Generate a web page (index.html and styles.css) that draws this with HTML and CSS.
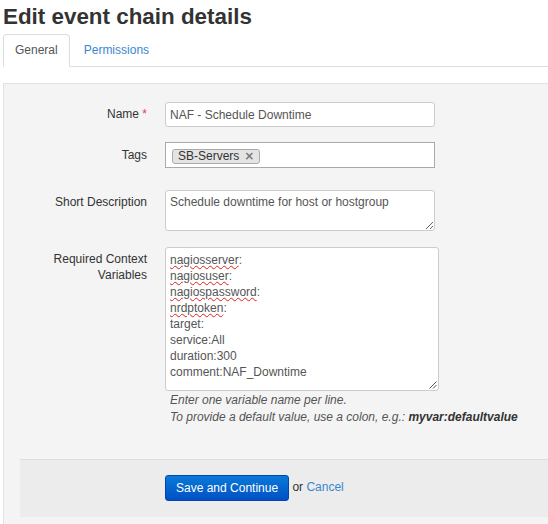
FILE: index.html
```html
<!DOCTYPE html>
<html>
<head>
<meta charset="utf-8">
<title>Edit event chain details</title>
<link rel="stylesheet" href="styles.css">
</head>
<body>
<div class="page">
  <h1 class="title">Edit event chain details</h1>
  <ul class="tabs">
    <li class="tab active"><a href="#">General</a></li>
    <li class="tab"><a href="#">Permissions</a></li>
  </ul>
  <div class="panel">
    <form class="form">
      <div class="group g-name">
        <label class="label">Name <span class="req">*</span></label>
        <div class="controls">
          <input class="input" type="text" value="NAF - Schedule Downtime">
        </div>
      </div>
      <div class="group g-tags">
        <label class="label">Tags</label>
        <div class="controls">
          <div class="tags"><span class="tag">SB-Servers<span class="tag-x">×</span></span></div>
        </div>
      </div>
      <div class="group g-desc">
        <label class="label">Short Description</label>
        <div class="controls">
          <textarea class="textarea desc">Schedule downtime for host or hostgroup</textarea>
        </div>
      </div>
      <div class="group g-vars">
        <label class="label">Required Context Variables</label>
        <div class="controls">
          <div class="textarea vars"><span class="sp">nagiosserver</span>:<br><span class="sp">nagiosuser</span>:<br><span class="sp">nagiospassword</span>:<br><span class="sp">nrdptoken</span>:<br>target:<br>service:All<br>duration:300<br>comment:NAF_Downtime<svg class="grip" width="9" height="9" viewBox="0 0 9 9"><path d="M8.5 1.5 L1.5 8.5 M8.5 5 L5 8.5" stroke="#555" stroke-width="1" fill="none"/></svg></div>
          <div class="help">
            <div>Enter one variable name per line.</div>
            <div>To provide a default value, use a colon, e.g.: <b>myvar:defaultvalue</b></div>
          </div>
        </div>
      </div>
      <div class="actions">
        <button class="btn" type="button">Save and Continue</button> or <a class="link" href="#">Cancel</a>
      </div>
    </form>
  </div>
</div>
</body>
</html>
```

FILE: styles.css
```css
html, body {
  margin: 0;
  padding: 0;
  background: #fff;
}
body {
  font-family: "Liberation Sans", Arial, sans-serif;
  font-size: 12px;
  color: #333;
}
.page {
  padding-left: 3px;
}
.title {
  margin: 4px 0 4px 0;
  font-size: 22.4px;
  line-height: 26px;
  font-weight: bold;
  color: #333;
}
.tabs {
  display: flex;
  list-style: none;
  margin: 0;
  padding: 0;
  border-bottom: 1px solid #ddd;
}
.tab {
  margin-right: 2px;
  margin-bottom: -1px;
}
.tab a {
  display: block;
  padding: 7px 11px 8px 11px;
  line-height: 16px;
  border: 1px solid transparent;
  border-radius: 4px 4px 0 0;
  color: #3a87cf;
  text-decoration: none;
}
.tab.active a {
  color: #555;
  background: #fff;
  border-color: #ddd #ddd transparent #ddd;
}
.panel {
  margin-top: 16px;
  background: #f4f4f4;
  border: 1px solid #e3e3e3;
  border-right: none;
  padding: 18px 0 20px 16px;
}
.group {
  display: flex;
  align-items: flex-start;
}
.label {
  width: 127px;
  flex: none;
  text-align: right;
  padding-top: 4px;
  line-height: 16px;
  color: #333;
}
.req {
  color: #e5413f;
}
.controls {
  margin-left: 18px;
}
.g-name { margin-bottom: 15px; }
.g-tags { margin-bottom: 22px; }
.g-tags .label { padding-top: 5px; }
.g-desc { margin-bottom: 16px; }
.input {
  display: block;
  box-sizing: border-box;
  width: 270px;
  height: 25px;
  margin: 0;
  padding: 0 4px;
  border: 1px solid #ccc;
  border-radius: 3px;
  background: #fff;
  font-family: "Liberation Sans", Arial, sans-serif;
  font-size: 12px;
  color: #555;
  outline: none;
}
.tags {
  box-sizing: border-box;
  width: 270px;
  height: 26px;
  border: 1px solid #aaa;
  background: #fff;
  padding: 6px 0 0 6px;
}
.tag {
  display: inline-flex;
  align-items: center;
  box-sizing: border-box;
  height: 15px;
  line-height: 13px;
  padding: 0 5px;
  border: 1px solid #aaa;
  border-radius: 3px;
  background: #e4e4e4;
  color: #333;
  vertical-align: top;
}
.tag-x {
  margin-left: 5px;
  font-family: "DejaVu Sans", sans-serif;
  font-weight: bold;
  color: #777;
  font-size: 12px;
  line-height: 13px;
}
.textarea {
  display: block;
  box-sizing: border-box;
  margin: 0;
  border: 1px solid #ccc;
  border-radius: 3px;
  background: #fff;
  font-family: "Liberation Sans", Arial, sans-serif;
  font-size: 12px;
  line-height: 16px;
  color: #555;
  outline: none;
}
.desc {
  width: 270px;
  height: 41px;
  padding: 3px 4px;
  resize: vertical;
}
.vars {
  position: relative;
  width: 274px;
  height: 144px;
  padding: 4px 4px;
}
.sp {
  text-decoration: underline wavy #e02020;
  text-decoration-thickness: 1px;
  text-underline-offset: 1px;
}
.grip {
  position: absolute;
  right: 1px;
  bottom: 1px;
}
.help {
  margin-top: 1px;
  padding-left: 5px;
  line-height: 17px;
  font-style: italic;
  color: #555;
}
.help b {
  color: #333;
}
.actions {
  margin-top: 33px;
  border-top: 1px solid #ddd;
  background: #ececec;
  padding: 15px 0 16px 145px;
  color: #333;
  line-height: 16px;
}
.btn {
  height: 26px;
  padding: 0 10px;
  border: 1px solid #0046b0;
  border-radius: 3px;
  background: linear-gradient(#0a7ad8, #0050c4);
  color: #fff;
  font-family: "Liberation Sans", Arial, sans-serif;
  font-size: 12px;
  vertical-align: middle;
  cursor: pointer;
}
.link {
  color: #3a87cf;
  text-decoration: none;
}
```
